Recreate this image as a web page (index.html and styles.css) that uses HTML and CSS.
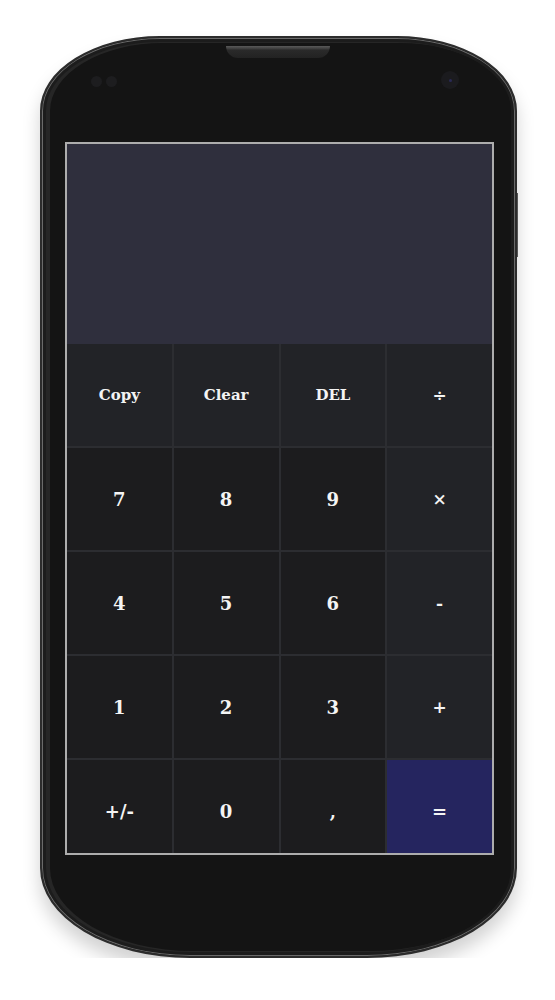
FILE: index.html
```html
<!DOCTYPE html>
<html lang="en">
<head>
<meta charset="utf-8">
<title>Calculator</title>
<link rel="stylesheet" href="styles.css">
</head>
<body>
<div class="phone">
  <div class="speaker"></div>
  <div class="sensors"><span class="dot"></span><span class="dot"></span></div>
  <div class="camera"><span class="lens"></span></div>
  <div class="side-button"></div>
  <div class="screen">
    <div class="display"></div>
    <div class="keys">
      <div class="key fn">Copy</div>
      <div class="key fn">Clear</div>
      <div class="key fn">DEL</div>
      <div class="key op">÷</div>
      <div class="key">7</div>
      <div class="key">8</div>
      <div class="key">9</div>
      <div class="key op">×</div>
      <div class="key">4</div>
      <div class="key">5</div>
      <div class="key">6</div>
      <div class="key op">-</div>
      <div class="key">1</div>
      <div class="key">2</div>
      <div class="key">3</div>
      <div class="key op">+</div>
      <div class="key">+/-</div>
      <div class="key">0</div>
      <div class="key">,</div>
      <div class="key eq">=</div>
    </div>
  </div>
</div>
</body>
</html>
```
FILE: styles.css
```css
html, body {
  margin: 0;
  padding: 0;
  background: #ffffff;
}

body {
  padding-top: 36px;
  padding-left: 40px;
  font-family: "DejaVu Serif", "Liberation Serif", serif;
}

.phone {
  position: relative;
  box-sizing: border-box;
  width: 477px;
  height: 922px;
  padding: 104px 21px 0 23px;
  background: #141414;
  border-radius: 120px 120px 150px 150px / 75px 75px 90px 90px;
  border: 2px solid #2c2c2c;
  box-shadow:
    inset 0 0 0 1px #6a6a6a,
    inset 0 0 0 4px #1c1c1c,
    inset 3px 0 0 5px #262626,
    0 12px 18px rgba(0, 0, 0, 0.18);
}

.speaker {
  position: absolute;
  left: 184px;
  top: 8px;
  width: 104px;
  height: 12px;
  border-radius: 0 0 14px 14px;
  background: linear-gradient(#5a5a5a 0, #3a3a3a 3px, #2a2a2a 4px, #222 100%);
}

.sensors {
  position: absolute;
  left: 49px;
  top: 38px;
  display: flex;
  gap: 4px;
}

.dot {
  width: 11px;
  height: 11px;
  border-radius: 50%;
  background: #1d1d1f;
}

.camera {
  position: absolute;
  left: 399px;
  top: 33px;
  width: 18px;
  height: 18px;
  border-radius: 50%;
  background: #1b1b1e;
  display: flex;
  align-items: center;
  justify-content: center;
}

.lens {
  width: 3px;
  height: 3px;
  border-radius: 50%;
  background: #2a2a55;
}

.side-button {
  position: absolute;
  right: -3px;
  top: 155px;
  width: 1px;
  height: 64px;
  background: #555;
}

.screen {
  box-sizing: border-box;
  width: 429px;
  height: 713px;
  border: 2px solid #adadad;
  overflow: hidden;
  background: #2c2d31;
  display: flex;
  flex-direction: column;
}

.display {
  flex: 0 0 200px;
  background: #2f2f3d;
}

.keys {
  display: grid;
  grid-template-columns: repeat(4, 1fr);
  grid-auto-rows: 102px;
  gap: 2px;
  background: #2c2d31;
}

.key {
  display: flex;
  align-items: center;
  justify-content: center;
  background: #1c1c1e;
  color: #f4f4f4;
  font-weight: 700;
  font-size: 18px;
}

.key.fn {
  background: #222327;
  font-size: 15px;
}

.key.op {
  background: #222327;
  font-size: 17px;
}

.key.eq {
  background: #25255f;
}
```
